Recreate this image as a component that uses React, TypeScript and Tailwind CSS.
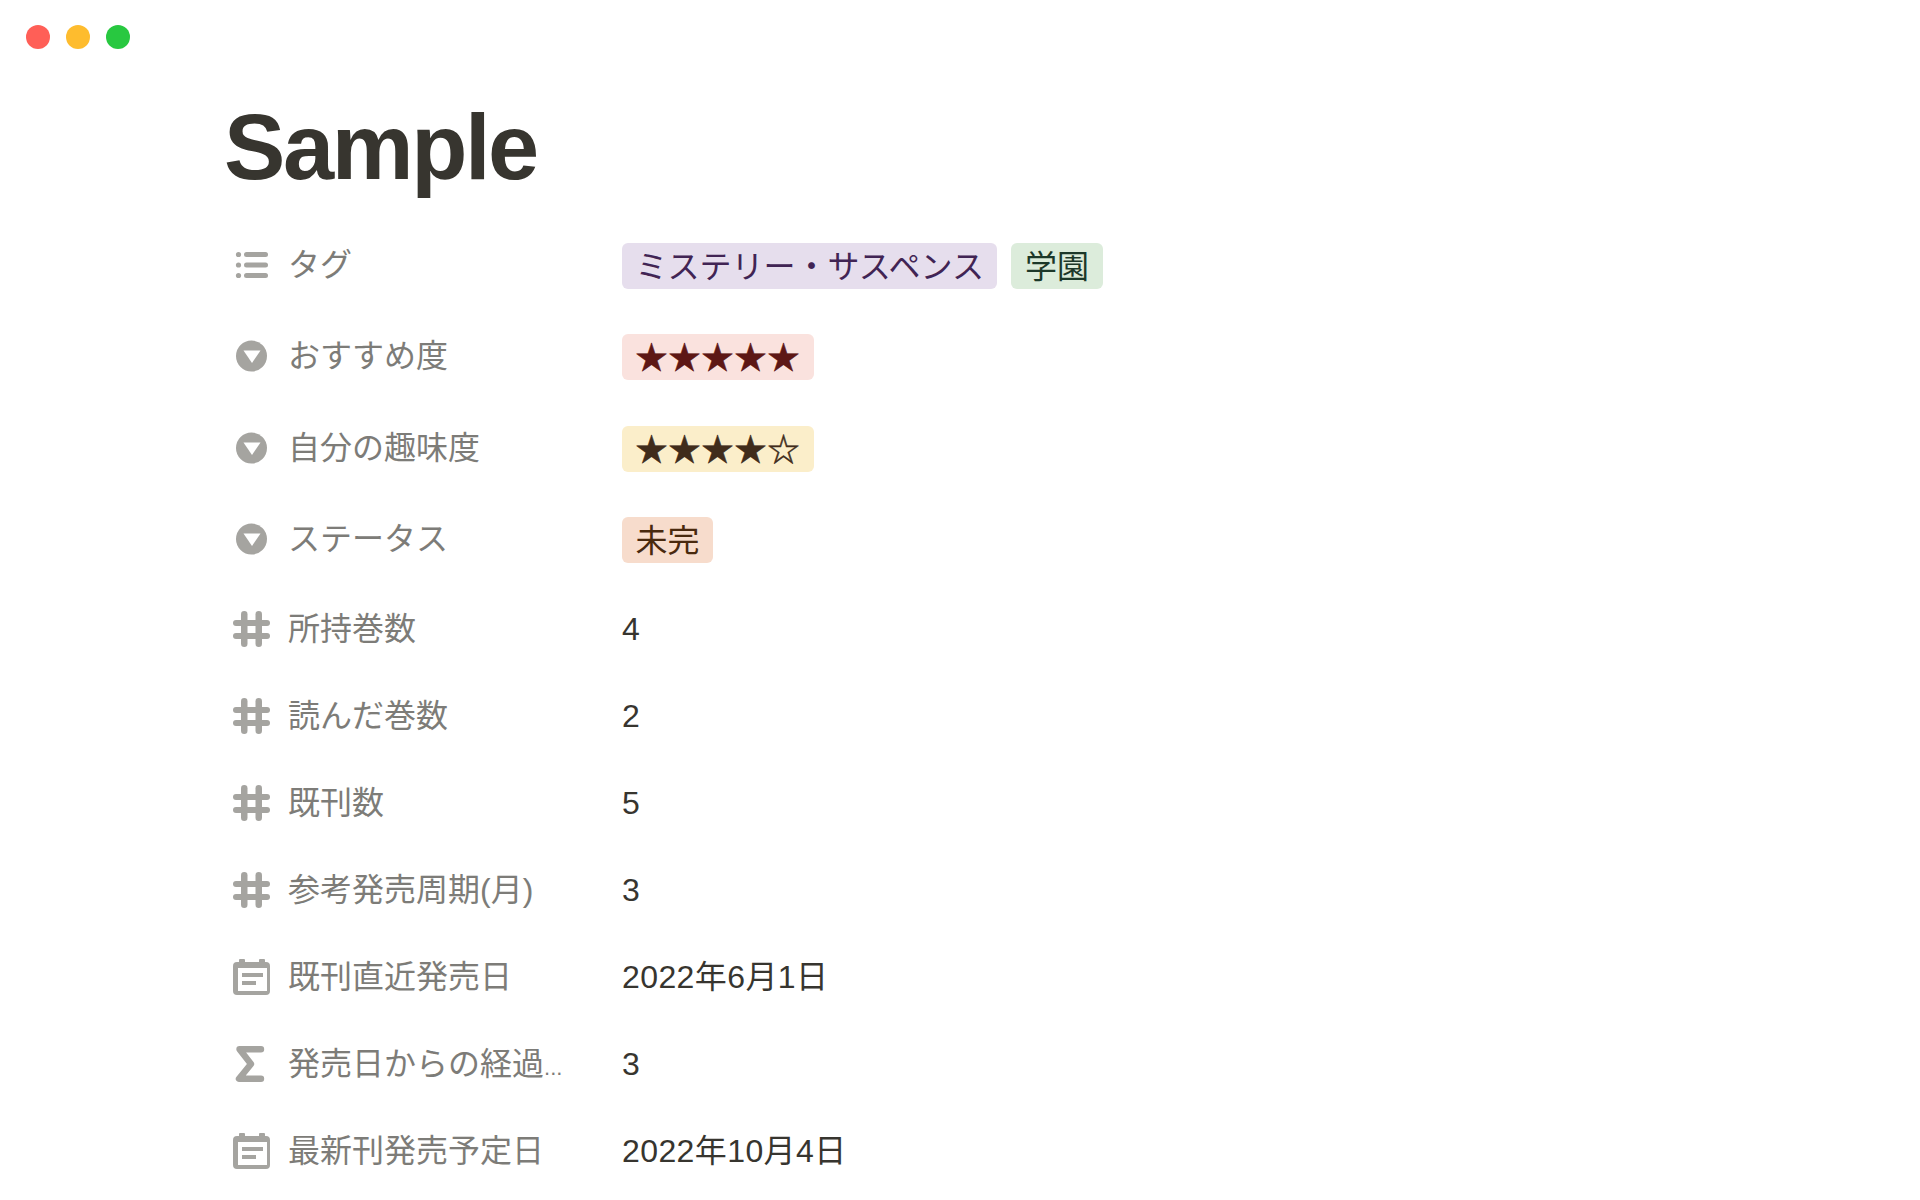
const font = "font-['Liberation_Sans','Noto_Sans_CJK_JP',sans-serif]";

function ListIcon() {
  return (
    <svg width="38" height="36" viewBox="0 0 38 36" fill="#a5a4a0">
      <circle cx="5.5" cy="7.5" r="2.6" />
      <circle cx="5.5" cy="18" r="2.6" />
      <circle cx="5.5" cy="28.5" r="2.6" />
      <rect x="11" y="5" width="24" height="5" rx="2.5" />
      <rect x="11" y="15.5" width="24" height="5" rx="2.5" />
      <rect x="11" y="26" width="24" height="5" rx="2.5" />
    </svg>
  );
}

function SelectIcon() {
  return (
    <svg width="38" height="36" viewBox="0 0 38 36">
      <circle cx="18.5" cy="18" r="15.5" fill="#a5a4a0" />
      <path d="M10.5 12.5h17L19 25z" fill="#fff" />
    </svg>
  );
}

function HashIcon() {
  return (
    <svg width="38" height="36" viewBox="0 0 38 36" fill="#a5a4a0">
      <rect x="8" y="0" width="6.5" height="36" rx="3.25" />
      <rect x="22.5" y="0" width="6.5" height="36" rx="3.25" />
      <rect x="0" y="9" width="37" height="6" rx="3" />
      <rect x="0" y="22" width="37" height="6" rx="3" />
    </svg>
  );
}

function CalendarIcon() {
  return (
    <svg width="38" height="36" viewBox="0 0 38 36">
      <path
        fillRule="evenodd"
        fill="#a5a4a0"
        d="M7 0h4a1 1 0 0 1 1 1v2h14V1a1 1 0 0 1 1-1h4a1 1 0 0 1 1 1v2h1a4 4 0 0 1 4 4v25a4 4 0 0 1-4 4H4a4 4 0 0 1-4-4V7a4 4 0 0 1 4-4h2V1a1 1 0 0 1 1-1zM5 9v23h29V9z"
      />
      <rect x="9" y="14" width="21" height="4" fill="#a5a4a0" />
      <rect x="9" y="22" width="14" height="4" fill="#a5a4a0" />
    </svg>
  );
}

function SigmaIcon() {
  return (
    <svg width="38" height="36" viewBox="0 0 38 36">
      <path
        d="M28 3.2H6.5L18 18 6 32.8h22"
        fill="none"
        stroke="#a5a4a0"
        strokeWidth="6.4"
        strokeLinecap="round"
        strokeLinejoin="round"
      />
    </svg>
  );
}

function Pill({ className, children }: { className: string; children: React.ReactNode }) {
  return (
    <span className={`mt-[2px] flex h-[46px] items-center whitespace-nowrap rounded-[6px] px-[13.5px] pt-[2px] text-[32px] leading-none ${className}`}>
      {children}
    </span>
  );
}

function Row({ icon, label, tall, children }: { icon: React.ReactNode; label: React.ReactNode; tall?: boolean; children: React.ReactNode }) {
  return (
    <div className={`flex items-center pl-[7px] ${tall ? "h-[91.5px]" : "h-[87px]"}`}>
      <div className="w-[55px] shrink-0">{icon}</div>
      <div className="w-[334px] shrink-0 text-[32px] leading-none text-[#7d7c78]">{label}</div>
      <div className="flex items-center gap-[14px] text-[32px] leading-none tracking-[0.4px] text-[#37352f]">{children}</div>
    </div>
  );
}

export default function App() {
  return (
    <div className={`h-[1200px] overflow-hidden bg-white ${font}`}>
      <div className="flex gap-4 pl-[26px] pt-[25px]">
        <div className="h-6 w-6 rounded-full bg-[#ff5f57]" />
        <div className="h-6 w-6 rounded-full bg-[#febc2e]" />
        <div className="h-6 w-6 rounded-full bg-[#28c840]" />
      </div>

      <div className="ml-[226px] mt-[43px]">
        <h1 className="-ml-[2px] h-[110px] text-[92px] font-bold leading-[110px] tracking-[-2.4px] text-[#37352f]">Sample</h1>

        <div className="mt-[17px]">
          <Row tall icon={<ListIcon />} label="タグ">
            <Pill className="bg-[#e6deed] tracking-normal text-[#412454]">ミステリー・サスペンス</Pill>
            <Pill className="bg-[#dcecdb] tracking-normal text-[#1c3829]">学園</Pill>
          </Row>
          <Row tall icon={<SelectIcon />} label="おすすめ度">
            <Pill className="bg-[#fae2de] tracking-[1px] text-[#5d1715] [-webkit-text-stroke:0.5px_#5d1715]">★★★★★</Pill>
          </Row>
          <Row tall icon={<SelectIcon />} label="自分の趣味度">
            <Pill className="bg-[#fbeeca] tracking-[1px] text-[#402c1b] [-webkit-text-stroke:0.5px_#402c1b]">★★★★☆</Pill>
          </Row>
          <Row tall icon={<SelectIcon />} label="ステータス">
            <Pill className="bg-[#f7dccc] tracking-normal text-[#49290e]">未完</Pill>
          </Row>
          <Row icon={<HashIcon />} label="所持巻数">4</Row>
          <Row icon={<HashIcon />} label="読んだ巻数">2</Row>
          <Row icon={<HashIcon />} label="既刊数">5</Row>
          <Row icon={<HashIcon />} label="参考発売周期(月)">3</Row>
          <Row icon={<CalendarIcon />} label="既刊直近発売日">2022年6月1日</Row>
          <Row icon={<SigmaIcon />} label={<>発売日からの経過<span className="text-[22px]">...</span></>}>3</Row>
          <Row icon={<CalendarIcon />} label="最新刊発売予定日">2022年10月4日</Row>
        </div>
      </div>
    </div>
  );
}
